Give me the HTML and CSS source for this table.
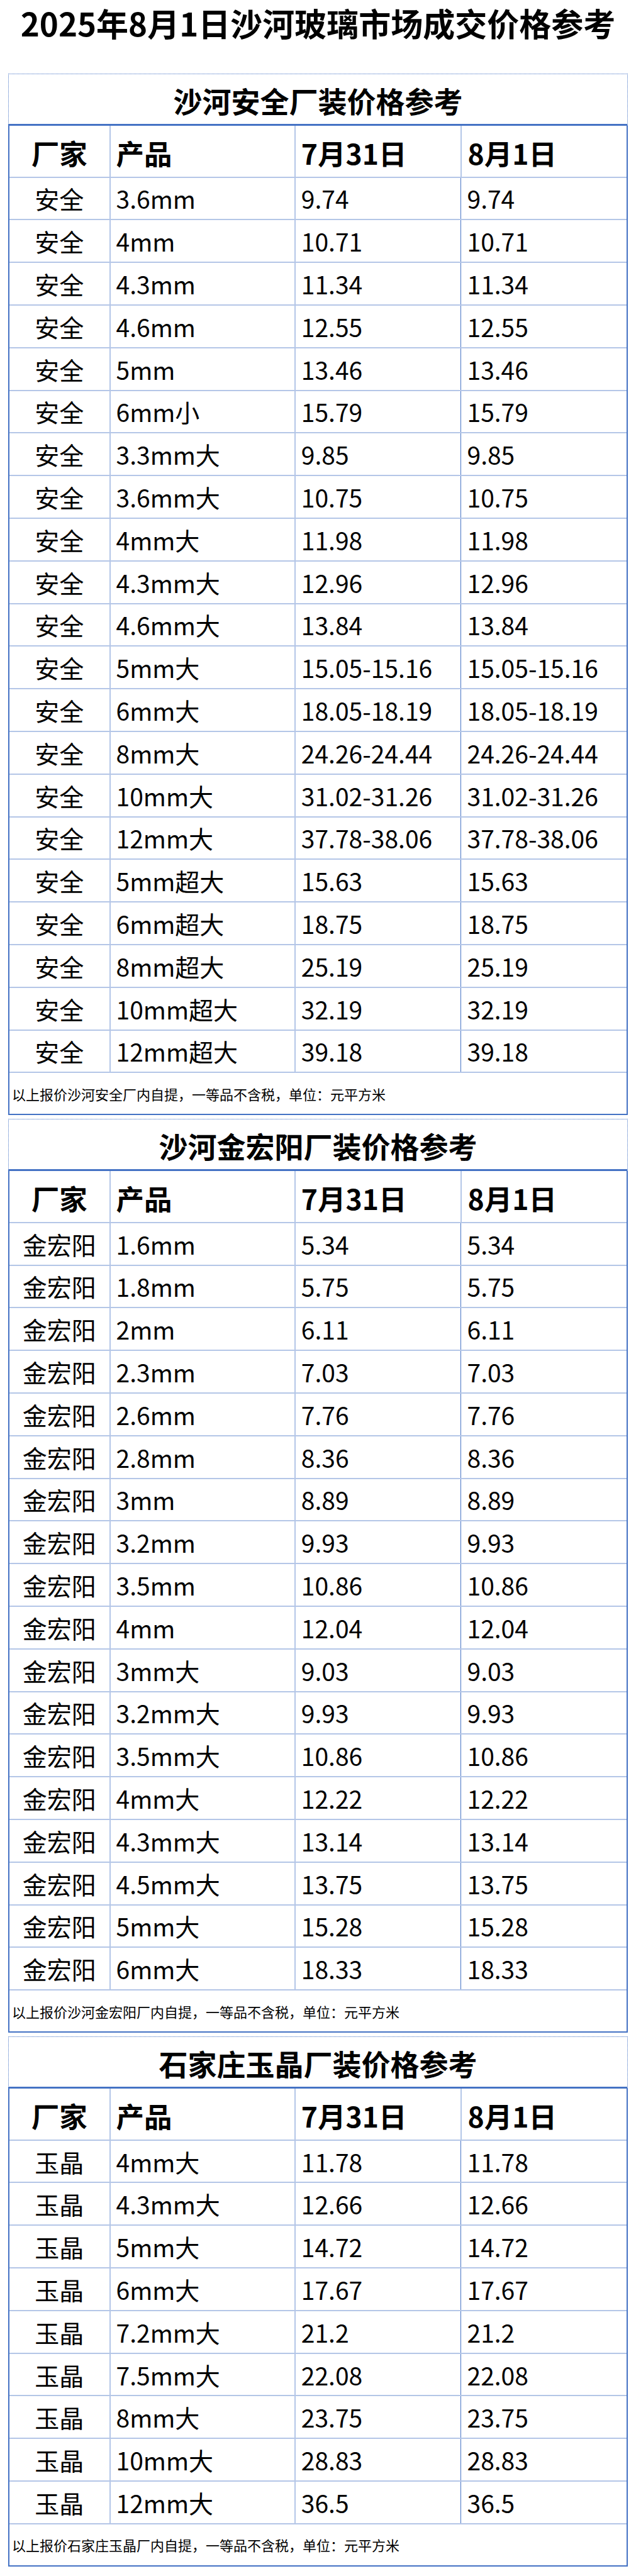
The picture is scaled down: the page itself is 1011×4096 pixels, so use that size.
FILE: index.html
```html
<!DOCTYPE html>
<html lang="zh-CN">
<head>
<meta charset="utf-8">
<title>2025年8月1日沙河玻璃市场成交价格参考</title>
<link rel="stylesheet" href="styles.css">
</head>
<body>
<h1 class="page-title">2025年8月1日沙河玻璃市场成交价格参考</h1>

<section class="block">
  <div class="block-title">沙河安全厂装价格参考</div>
  <div class="grid">
    <div class="row head"><div class="c c1">厂家</div><div class="c c2">产品</div><div class="c c3">7月31日</div><div class="c c4">8月1日</div></div>
    <div class="row"><div class="c c1">安全</div><div class="c c2">3.6mm</div><div class="c c3">9.74</div><div class="c c4">9.74</div></div>
    <div class="row"><div class="c c1">安全</div><div class="c c2">4mm</div><div class="c c3">10.71</div><div class="c c4">10.71</div></div>
    <div class="row"><div class="c c1">安全</div><div class="c c2">4.3mm</div><div class="c c3">11.34</div><div class="c c4">11.34</div></div>
    <div class="row"><div class="c c1">安全</div><div class="c c2">4.6mm</div><div class="c c3">12.55</div><div class="c c4">12.55</div></div>
    <div class="row"><div class="c c1">安全</div><div class="c c2">5mm</div><div class="c c3">13.46</div><div class="c c4">13.46</div></div>
    <div class="row"><div class="c c1">安全</div><div class="c c2">6mm小</div><div class="c c3">15.79</div><div class="c c4">15.79</div></div>
    <div class="row"><div class="c c1">安全</div><div class="c c2">3.3mm大</div><div class="c c3">9.85</div><div class="c c4">9.85</div></div>
    <div class="row"><div class="c c1">安全</div><div class="c c2">3.6mm大</div><div class="c c3">10.75</div><div class="c c4">10.75</div></div>
    <div class="row"><div class="c c1">安全</div><div class="c c2">4mm大</div><div class="c c3">11.98</div><div class="c c4">11.98</div></div>
    <div class="row"><div class="c c1">安全</div><div class="c c2">4.3mm大</div><div class="c c3">12.96</div><div class="c c4">12.96</div></div>
    <div class="row"><div class="c c1">安全</div><div class="c c2">4.6mm大</div><div class="c c3">13.84</div><div class="c c4">13.84</div></div>
    <div class="row"><div class="c c1">安全</div><div class="c c2">5mm大</div><div class="c c3">15.05-15.16</div><div class="c c4">15.05-15.16</div></div>
    <div class="row"><div class="c c1">安全</div><div class="c c2">6mm大</div><div class="c c3">18.05-18.19</div><div class="c c4">18.05-18.19</div></div>
    <div class="row"><div class="c c1">安全</div><div class="c c2">8mm大</div><div class="c c3">24.26-24.44</div><div class="c c4">24.26-24.44</div></div>
    <div class="row"><div class="c c1">安全</div><div class="c c2">10mm大</div><div class="c c3">31.02-31.26</div><div class="c c4">31.02-31.26</div></div>
    <div class="row"><div class="c c1">安全</div><div class="c c2">12mm大</div><div class="c c3">37.78-38.06</div><div class="c c4">37.78-38.06</div></div>
    <div class="row"><div class="c c1">安全</div><div class="c c2">5mm超大</div><div class="c c3">15.63</div><div class="c c4">15.63</div></div>
    <div class="row"><div class="c c1">安全</div><div class="c c2">6mm超大</div><div class="c c3">18.75</div><div class="c c4">18.75</div></div>
    <div class="row"><div class="c c1">安全</div><div class="c c2">8mm超大</div><div class="c c3">25.19</div><div class="c c4">25.19</div></div>
    <div class="row"><div class="c c1">安全</div><div class="c c2">10mm超大</div><div class="c c3">32.19</div><div class="c c4">32.19</div></div>
    <div class="row"><div class="c c1">安全</div><div class="c c2">12mm超大</div><div class="c c3">39.18</div><div class="c c4">39.18</div></div>
    <div class="note">以上报价沙河安全厂内自提，一等品不含税，单位：元平方米</div>
  </div>
</section>

<section class="block">
  <div class="block-title">沙河金宏阳厂装价格参考</div>
  <div class="grid">
    <div class="row head"><div class="c c1">厂家</div><div class="c c2">产品</div><div class="c c3">7月31日</div><div class="c c4">8月1日</div></div>
    <div class="row"><div class="c c1">金宏阳</div><div class="c c2">1.6mm</div><div class="c c3">5.34</div><div class="c c4">5.34</div></div>
    <div class="row"><div class="c c1">金宏阳</div><div class="c c2">1.8mm</div><div class="c c3">5.75</div><div class="c c4">5.75</div></div>
    <div class="row"><div class="c c1">金宏阳</div><div class="c c2">2mm</div><div class="c c3">6.11</div><div class="c c4">6.11</div></div>
    <div class="row"><div class="c c1">金宏阳</div><div class="c c2">2.3mm</div><div class="c c3">7.03</div><div class="c c4">7.03</div></div>
    <div class="row"><div class="c c1">金宏阳</div><div class="c c2">2.6mm</div><div class="c c3">7.76</div><div class="c c4">7.76</div></div>
    <div class="row"><div class="c c1">金宏阳</div><div class="c c2">2.8mm</div><div class="c c3">8.36</div><div class="c c4">8.36</div></div>
    <div class="row"><div class="c c1">金宏阳</div><div class="c c2">3mm</div><div class="c c3">8.89</div><div class="c c4">8.89</div></div>
    <div class="row"><div class="c c1">金宏阳</div><div class="c c2">3.2mm</div><div class="c c3">9.93</div><div class="c c4">9.93</div></div>
    <div class="row"><div class="c c1">金宏阳</div><div class="c c2">3.5mm</div><div class="c c3">10.86</div><div class="c c4">10.86</div></div>
    <div class="row"><div class="c c1">金宏阳</div><div class="c c2">4mm</div><div class="c c3">12.04</div><div class="c c4">12.04</div></div>
    <div class="row"><div class="c c1">金宏阳</div><div class="c c2">3mm大</div><div class="c c3">9.03</div><div class="c c4">9.03</div></div>
    <div class="row"><div class="c c1">金宏阳</div><div class="c c2">3.2mm大</div><div class="c c3">9.93</div><div class="c c4">9.93</div></div>
    <div class="row"><div class="c c1">金宏阳</div><div class="c c2">3.5mm大</div><div class="c c3">10.86</div><div class="c c4">10.86</div></div>
    <div class="row"><div class="c c1">金宏阳</div><div class="c c2">4mm大</div><div class="c c3">12.22</div><div class="c c4">12.22</div></div>
    <div class="row"><div class="c c1">金宏阳</div><div class="c c2">4.3mm大</div><div class="c c3">13.14</div><div class="c c4">13.14</div></div>
    <div class="row"><div class="c c1">金宏阳</div><div class="c c2">4.5mm大</div><div class="c c3">13.75</div><div class="c c4">13.75</div></div>
    <div class="row"><div class="c c1">金宏阳</div><div class="c c2">5mm大</div><div class="c c3">15.28</div><div class="c c4">15.28</div></div>
    <div class="row"><div class="c c1">金宏阳</div><div class="c c2">6mm大</div><div class="c c3">18.33</div><div class="c c4">18.33</div></div>
    <div class="note">以上报价沙河金宏阳厂内自提，一等品不含税，单位：元平方米</div>
  </div>
</section>

<section class="block">
  <div class="block-title">石家庄玉晶厂装价格参考</div>
  <div class="grid">
    <div class="row head"><div class="c c1">厂家</div><div class="c c2">产品</div><div class="c c3">7月31日</div><div class="c c4">8月1日</div></div>
    <div class="row"><div class="c c1">玉晶</div><div class="c c2">4mm大</div><div class="c c3">11.78</div><div class="c c4">11.78</div></div>
    <div class="row"><div class="c c1">玉晶</div><div class="c c2">4.3mm大</div><div class="c c3">12.66</div><div class="c c4">12.66</div></div>
    <div class="row"><div class="c c1">玉晶</div><div class="c c2">5mm大</div><div class="c c3">14.72</div><div class="c c4">14.72</div></div>
    <div class="row"><div class="c c1">玉晶</div><div class="c c2">6mm大</div><div class="c c3">17.67</div><div class="c c4">17.67</div></div>
    <div class="row"><div class="c c1">玉晶</div><div class="c c2">7.2mm大</div><div class="c c3">21.2</div><div class="c c4">21.2</div></div>
    <div class="row"><div class="c c1">玉晶</div><div class="c c2">7.5mm大</div><div class="c c3">22.08</div><div class="c c4">22.08</div></div>
    <div class="row"><div class="c c1">玉晶</div><div class="c c2">8mm大</div><div class="c c3">23.75</div><div class="c c4">23.75</div></div>
    <div class="row"><div class="c c1">玉晶</div><div class="c c2">10mm大</div><div class="c c3">28.83</div><div class="c c4">28.83</div></div>
    <div class="row"><div class="c c1">玉晶</div><div class="c c2">12mm大</div><div class="c c3">36.5</div><div class="c c4">36.5</div></div>
    <div class="note">以上报价石家庄玉晶厂内自提，一等品不含税，单位：元平方米</div>
  </div>
</section>
</body>
</html>
```

FILE: styles.css
```css
html, body {
  margin: 0;
  padding: 0;
  background: #ffffff;
}

body {
  font-family: "Noto Sans CJK SC", "Noto Sans", sans-serif;
  color: #000000;
  padding: 0 13px 0 13px;
}

.page-title {
  margin: 0 0 43.6px 0;
  height: 73px;
  line-height: 73px;
  font-size: 51px;
  font-weight: 700;
  text-align: center;
  letter-spacing: 0;
  white-space: nowrap;
}

.block {
  width: 985px;
  margin-bottom: 5.5px;
}

.block-title {
  box-sizing: border-box;
  height: 83.3px;
  border-top: 1px dotted #4472c4;
  border-left: 1px dotted #4472c4;
  border-right: 1px dotted #4472c4;
  border-bottom: 3px solid #4472c4;
  display: flex;
  align-items: center;
  justify-content: center;
  font-size: 46px;
  font-weight: 700;
  padding-top: 4px;
}

.grid {
  border-left: 2px solid #4472c4;
  border-right: 2px solid #4472c4;
  border-bottom: 2px solid #4472c4;
}

.row {
  box-sizing: border-box;
  display: grid;
  grid-template-columns: 158.5px 294.3px 264.7px 1fr;
  height: 67.8px;
  border-bottom: 2px solid #b4c6e7;
}

.row.head {
  height: 82.7px;
}

.c {
  display: flex;
  align-items: center;
  font-size: 39px;
  white-space: nowrap;
  overflow: hidden;
}

.c1 {
  justify-content: center;
}

.c2 {
  border-left: 2px solid #b4c6e7;
  padding-left: 9px;
}

.c3 {
  border-left: 2px solid #b4c6e7;
  padding-left: 9px;
}

.c4 {
  border-left: 1px solid #4472c4;
  padding-left: 9px;
}

.head .c {
  font-size: 44.5px;
  font-weight: 700;
  padding-top: 4px;
}

.head .c4 {
  border-left: 2px solid #b4c6e7;
}

.note {
  box-sizing: border-box;
  height: 65px;
  display: flex;
  align-items: center;
  padding-left: 4px;
  font-size: 22px;
  white-space: nowrap;
}
```
